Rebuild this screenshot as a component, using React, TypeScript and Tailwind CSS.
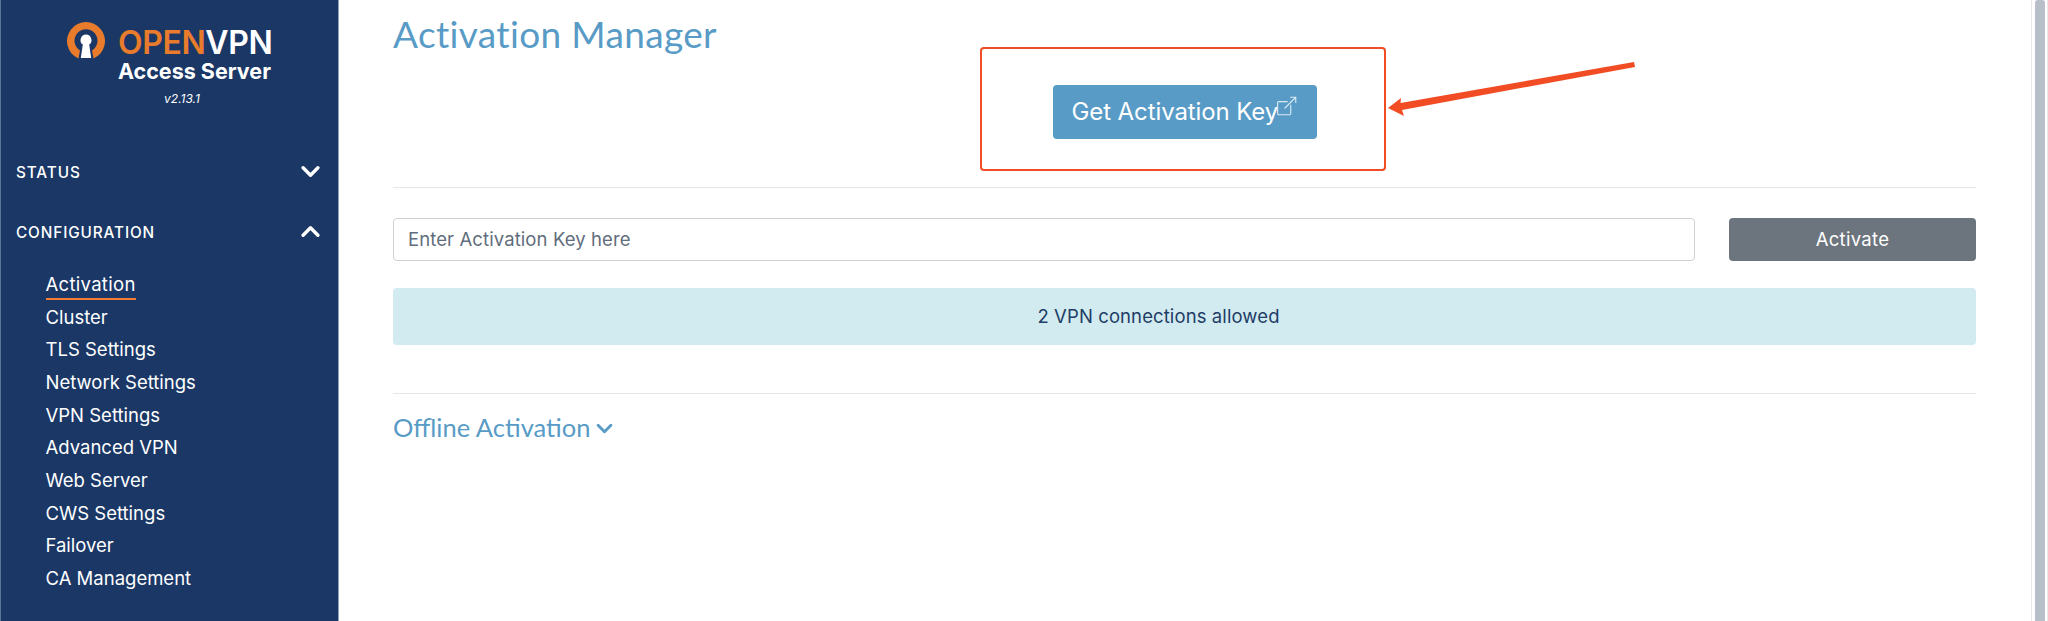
import React from "react";

const poppins = { fontFamily: '"Inter", "Liberation Sans", sans-serif' };

function Chevron({ up, className }: { up?: boolean; className?: string }) {
  return (
    <svg viewBox="0 0 18 12" className={className} fill="none" stroke="currentColor" strokeWidth="3.2" strokeLinecap="round" strokeLinejoin="round">
      <path d={up ? "M2 9.5 L9 2.5 L16 9.5" : "M2 2.5 L9 9.5 L16 2.5"} />
    </svg>
  );
}

function Logo() {
  return (
    <svg viewBox="0 0 40 40" className="w-[40px] h-[40px] shrink-0">
      <path fillRule="evenodd" fill="#e87b2c" d="M12.5 36.5 A19 19 0 1 1 27.5 36.5 L26 28.5 A11.5 11.5 0 1 0 14 28.5 Z" />
      <path fill="#ffffff" d="M20 12.5 A5.6 5.6 0 0 1 23.2 22.6 L25.2 36 L14.8 36 L16.8 22.6 A5.6 5.6 0 0 1 20 12.5 Z" />
    </svg>
  );
}

const items = ["Activation", "Cluster", "TLS Settings", "Network Settings", "VPN Settings", "Advanced VPN", "Web Server", "CWS Settings", "Failover", "CA Management"];

export default function App() {
  return (
    <div className="flex h-[621px] w-[2048px] overflow-hidden bg-white text-[#1a3765]" style={poppins}>
      <aside className="w-[339px] shrink-0 bg-[#1a3766] border-l border-l-[#5b7596] border-r border-r-[#8fa0b8] text-white">
        <div className="flex flex-col pt-[22px] pl-[65px]">
          <div className="flex items-start">
            <Logo />
            <div className="ml-[12px] flex flex-col">
              <div className="text-[32px] leading-[34px] font-semibold tracking-[-0.4px] mt-[4px]">
                <span className="text-[#e87b2c]">OPEN</span>VPN
              </div>
              <div className="text-[21.5px] leading-[22px] font-bold whitespace-nowrap">Access Server</div>
            </div>
          </div>
          <div className="text-[12px] leading-[16px] italic text-center mt-[9px] ml-[46px] w-[140px]">v2.13.1</div>
        </div>
        <div className="mt-[54px] pl-[15px] pr-[18px]">
          <div className="flex items-center justify-between h-[24px]">
            <span className="text-[15.3px] font-medium tracking-[0.9px]">STATUS</span>
            <Chevron className="w-[19px] h-[13px] mb-[3px]" />
          </div>
          <div className="flex items-center justify-between h-[24px] mt-[36px]">
            <span className="text-[15.3px] font-medium tracking-[0.9px]">CONFIGURATION</span>
            <Chevron up className="w-[19px] h-[13px] mb-[3px]" />
          </div>
          <ul className="mt-[26px] pl-[29.5px]">
            {items.map((it, i) => (
              <li key={it} className="h-[32.67px] text-[18.5px] leading-[26px]">
                <span className={i === 0 ? "inline-block h-[29px] border-b-[2.5px] border-[#f47b34] tracking-[0.3px]" : "inline-block"}>{it}</span>
              </li>
            ))}
          </ul>
        </div>
      </aside>

      <main className="flex-1 pl-[54px] pr-[55px] relative">
        <h1 className="text-[37px] leading-[42px] text-[#589bc6] mt-[13px]" style={{ fontFamily: '"Lato", "Inter", sans-serif', fontWeight: 400, letterSpacing: "0.35px" }}>
          Activation Manager
        </h1>
        <div className="flex justify-center mt-[30px]">
          <button className="relative w-[264px] h-[54px] rounded-[4px] bg-[#589bc6] text-white text-[24px] text-left pl-[19px] tracking-[-0.1px]">
            Get Activation Key
            <svg viewBox="0 0 16 16" className="absolute left-[224px] top-[11px] w-[20px] h-[20px]" fill="none" stroke="#dbe9f3" strokeWidth="0.9">
              <path d="M11 7 V14 a1 1 0 0 1 -1 1 H1.5 a1 1 0 0 1 -1 -1 V5.5 a1 1 0 0 1 1 -1 H8.5" />
              <path d="M6 10 L15 1 M10.5 1 H15 V5.5" />
            </svg>
          </button>
        </div>
        <hr className="mt-[48px] border-t border-[#e4e6e8]" />
        <div className="flex gap-[34px] mt-[30px]">
          <div className="flex-1 h-[43px] rounded-[4px] border border-[#ced1d6] flex items-center pl-[14px] text-[18.5px] tracking-[0.1px] text-[#616d7c]">
            Enter Activation Key here
          </div>
          <button className="w-[247px] h-[43px] rounded-[4px] bg-[#6c757d] text-white text-[18.5px] tracking-[0.3px]">Activate</button>
        </div>
        <div className="mt-[27px] h-[57px] rounded-[4px] bg-[#d1ebf0] flex items-center justify-center pr-[52px] text-[18.5px] tracking-[0.1px] text-[#1f3d66]">
          2 VPN connections allowed
        </div>
        <hr className="mt-[48px] border-t border-[#e4e6e8]" />
        <div className="flex items-center mt-[16px] text-[#589bc6]">
          <span className="text-[25.5px] leading-[34px]" style={{ fontFamily: '"Lato", "Inter", sans-serif' }}>Offline Activation</span>
          <Chevron className="w-[17px] h-[11px] ml-[6px] mt-[2px]" />
        </div>

        <div className="absolute left-[641px] top-[47px] w-[406px] h-[124px] rounded-[4px] border-2 border-[#f24c25] pointer-events-none" />
        <svg viewBox="0 0 260 60" className="absolute left-[1046px] top-[56px] w-[260px] h-[60px] pointer-events-none">
          <polygon fill="#f24c25" points="3,52 16,42 15.5,47 249,6 250,11 17,54 19,60" />
        </svg>
      </main>

      <div className="w-[17px] shrink-0 bg-white border-l border-r border-[#e8e8e8] pl-[3px]">
        <div className="h-full w-[10px] rounded-t-[3px] bg-[#b9bfc9]" />
      </div>
    </div>
  );
}
